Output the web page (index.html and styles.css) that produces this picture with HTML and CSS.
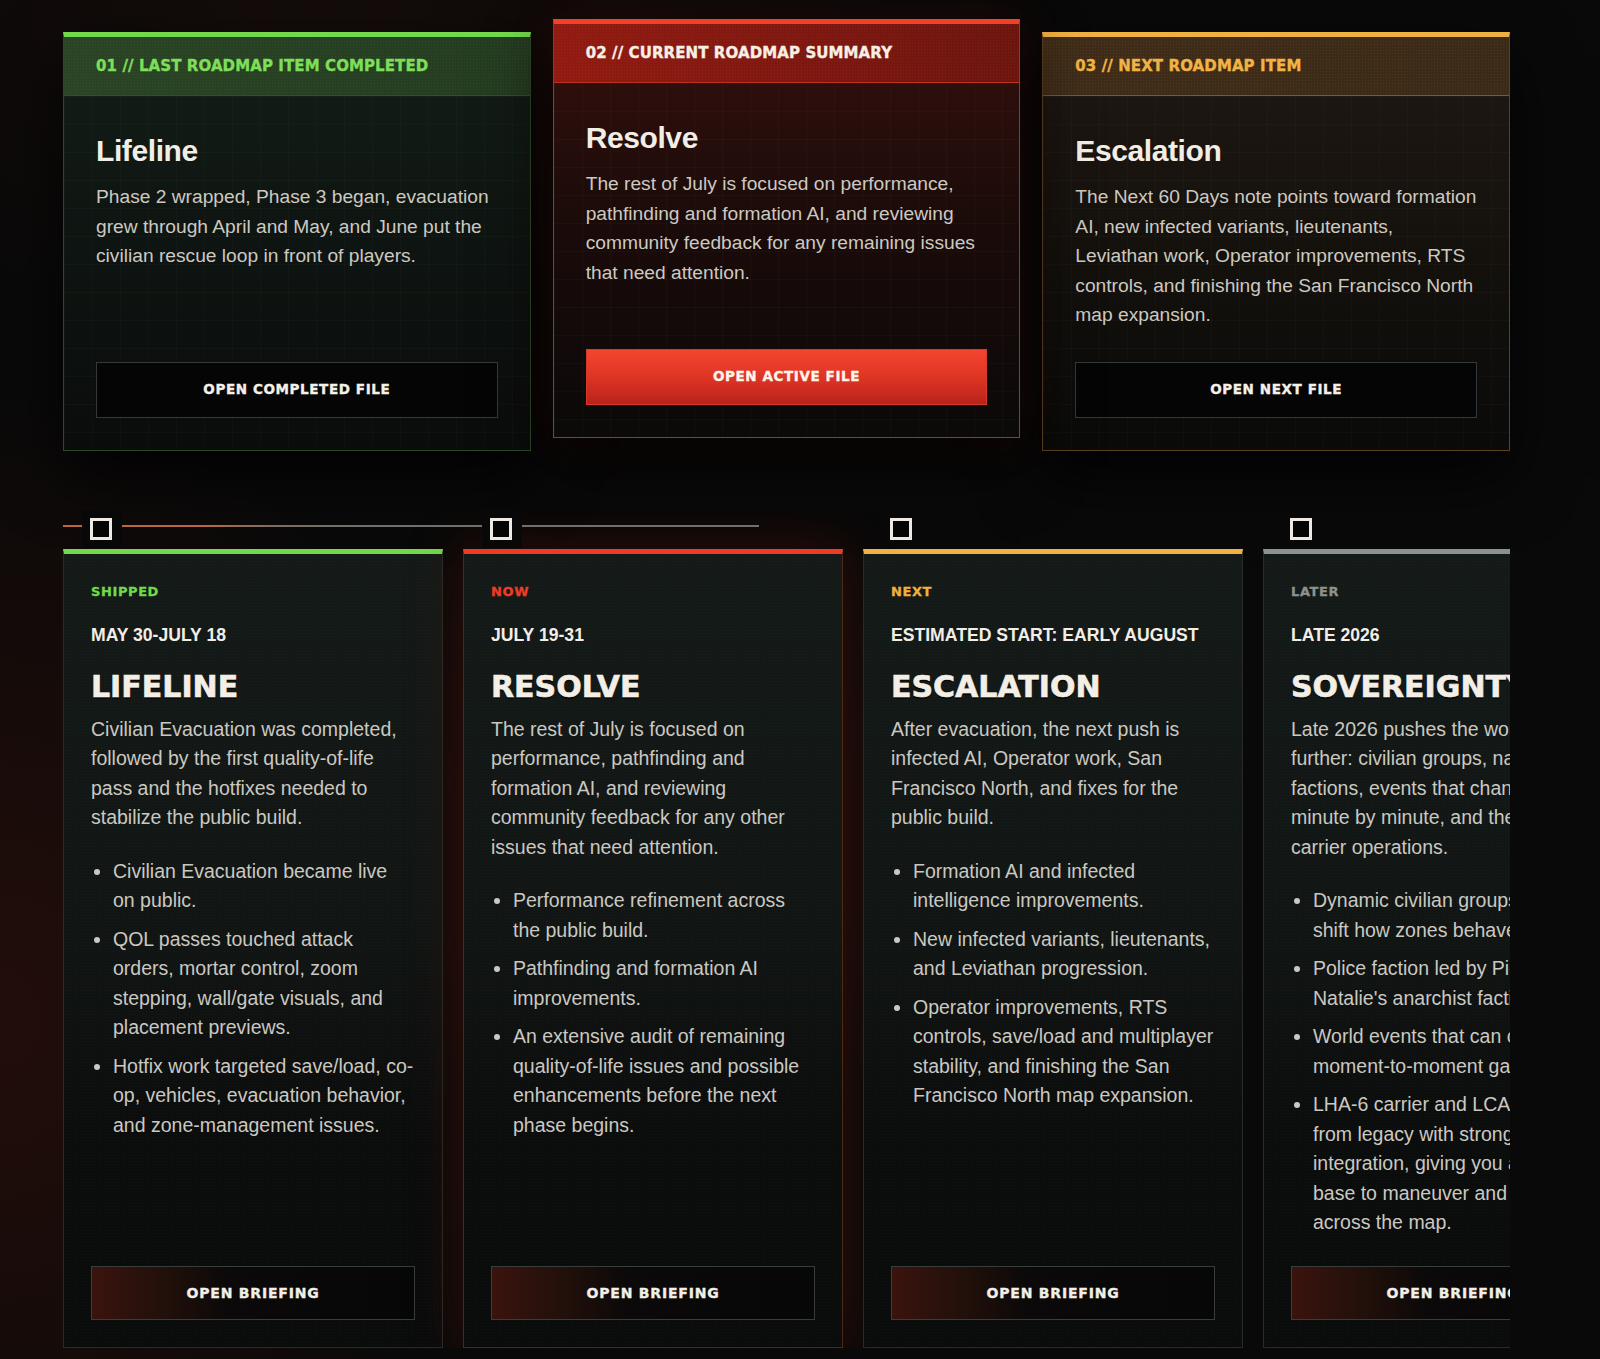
FILE: index.html
```html
<!DOCTYPE html>
<html lang="en">
<head>
<meta charset="utf-8">
<title>Roadmap</title>
<link rel="stylesheet" href="styles.css">
</head>
<body>
<div class="page">
  <section class="summary">
    <article class="sum-card sum-done">
      <header class="sum-head">01 // LAST ROADMAP ITEM COMPLETED</header>
      <div class="sum-body">
        <h2>Lifeline</h2>
        <p>Phase 2 wrapped, Phase 3 began, evacuation grew through April and May, and June put the civilian rescue loop in front of players.</p>
        <a class="sum-btn">OPEN COMPLETED FILE</a>
      </div>
    </article>
    <article class="sum-card sum-now">
      <header class="sum-head">02 // CURRENT ROADMAP SUMMARY</header>
      <div class="sum-body">
        <h2>Resolve</h2>
        <p>The rest of July is focused on performance, pathfinding and formation AI, and reviewing community feedback for any remaining issues that need attention.</p>
        <a class="sum-btn">OPEN ACTIVE FILE</a>
      </div>
    </article>
    <article class="sum-card sum-next">
      <header class="sum-head">03 // NEXT ROADMAP ITEM</header>
      <div class="sum-body">
        <h2>Escalation</h2>
        <p>The Next 60 Days note points toward formation AI, new infected variants, lieutenants, Leviathan work, Operator improvements, RTS controls, and finishing the San Francisco North map expansion.</p>
        <a class="sum-btn">OPEN NEXT FILE</a>
      </div>
    </article>
  </section>

  <section class="timeline">
    <div class="tl-line"></div>
    <div class="tl-track">
      <div class="tl-col">
        <div class="tl-marker"><span></span></div>
        <article class="phase phase-shipped">
          <div class="phase-label">SHIPPED</div>
          <div class="phase-date">MAY 30-JULY 18</div>
          <h3>LIFELINE</h3>
          <p>Civilian Evacuation was completed, followed by the first quality-of-life pass and the hotfixes needed to stabilize the public build.</p>
          <ul>
            <li>Civilian Evacuation became live on&nbsp;public.</li>
            <li>QOL passes touched attack orders, mortar control, zoom stepping, wall/gate visuals, and placement previews.</li>
            <li>Hotfix work targeted save/load, co-op, vehicles, evacuation behavior, and zone-management issues.</li>
          </ul>
          <a class="phase-btn">OPEN BRIEFING</a>
        </article>
      </div>
      <div class="tl-col">
        <div class="tl-marker"><span></span></div>
        <article class="phase phase-current">
          <div class="phase-label">NOW</div>
          <div class="phase-date">JULY 19-31</div>
          <h3>RESOLVE</h3>
          <p>The rest of July is focused on performance, pathfinding and formation AI, and reviewing community feedback for any other issues that need attention.</p>
          <ul>
            <li>Performance refinement across the&nbsp;public build.</li>
            <li>Pathfinding and formation AI improvements.</li>
            <li>An extensive audit of remaining quality-of-life issues and possible enhancements before the next phase begins.</li>
          </ul>
          <a class="phase-btn">OPEN BRIEFING</a>
        </article>
      </div>
      <div class="tl-col">
        <div class="tl-marker"><span></span></div>
        <article class="phase phase-next">
          <div class="phase-label">NEXT</div>
          <div class="phase-date">ESTIMATED START: EARLY AUGUST</div>
          <h3>ESCALATION</h3>
          <p>After evacuation, the next push is infected AI, Operator work, San Francisco North, and fixes for the public build.</p>
          <ul>
            <li>Formation AI and infected intelligence improvements.</li>
            <li>New infected variants, lieutenants, and Leviathan progression.</li>
            <li>Operator improvements, RTS controls, save/load and multiplayer stability, and finishing the San Francisco North map expansion.</li>
          </ul>
          <a class="phase-btn">OPEN BRIEFING</a>
        </article>
      </div>
      <div class="tl-col">
        <div class="tl-marker"><span></span></div>
        <article class="phase phase-later">
          <div class="phase-label">LATER</div>
          <div class="phase-date">LATE 2026</div>
          <h3>SOVEREIGNTY</h3>
          <p>Late 2026 pushes the world even further: civilian groups, named factions, events that change the city minute by minute, and the return of carrier operations.</p>
          <ul>
            <li>Dynamic civilian groups that will shift how zones behave.</li>
            <li>Police faction led by Pierce and Natalie's anarchist faction.</li>
            <li>World events that can change the moment-to-moment gameplay.</li>
            <li>LHA-6 carrier and LCACs return from legacy with stronger integration, giving you a floating base to maneuver and deploy across the map.</li>
          </ul>
          <a class="phase-btn">OPEN BRIEFING</a>
        </article>
      </div>
    </div>
  </section>
</div>
</body>
</html>
```

FILE: styles.css
```css
* { box-sizing: border-box; }

html, body {
  margin: 0;
  padding: 0;
  background: #0a0909;
}

body {
  min-height: 1359px;
  font-family: "Liberation Sans", Arial, sans-serif;
  color: #c9c6bf;
  background:
    radial-gradient(ellipse 700px 900px at 0% 75%, rgba(80, 22, 12, 0.35), transparent 70%),
    radial-gradient(ellipse 500px 420px at 41% 62%, rgba(90, 20, 10, 0.22), transparent 70%),
    radial-gradient(ellipse 800px 500px at 20% 0%, rgba(40, 18, 12, 0.35), transparent 70%),
    #0a0909;
}

.page {
  width: 1600px;
  padding: 32px 90px 11px 63px;
}

/* ---------- summary cards ---------- */
.summary {
  display: grid;
  grid-template-columns: repeat(3, 1fr);
  gap: 22px;
}

.sum-card {
  display: flex;
  flex-direction: column;
  border: 1px solid;
  border-top-width: 5px;
  box-shadow: 0 26px 60px rgba(0, 0, 0, 0.75);
}

.sum-head {
  height: 59px;
  display: flex;
  align-items: center;
  padding: 0 32px;
  font: 700 15px/1 "DejaVu Sans", sans-serif;
  letter-spacing: 0.1px;
  -webkit-text-stroke: 0.35px currentColor;
  border-bottom: 1px solid;
  background-size: 3px 3px, 100% 100%;
}

.sum-body {
  flex: 1;
  display: flex;
  flex-direction: column;
  padding: 37px 32px 32px;
  background-size: 28px 28px, 28px 28px, 100% 100%;
}

.sum-body h2 {
  margin: 0 0 13px;
  font: 700 30px/36px "Liberation Sans", Arial, sans-serif;
  letter-spacing: -0.4px;
  color: #f2eee6;
}

.sum-body p {
  margin: 0 0 32px;
  font-size: 19.2px;
  line-height: 29.5px;
  color: #cdc9c1;
}

.sum-btn {
  margin-top: auto;
  height: 56px;
  display: flex;
  align-items: center;
  justify-content: center;
  font: 700 13.5px/1 "DejaVu Sans", sans-serif;
  letter-spacing: 0.6px;
  -webkit-text-stroke: 0.35px currentColor;
  color: #f6f1e8;
  background: #050505;
  border: 1px solid #34383a;
}

.sum-done {
  border-color: #2c4a28;
  border-top-color: #73d94c;
}
.sum-done .sum-head {
  color: #7ddf58;
  border-bottom-color: #3b4a37;
  background-image:
    radial-gradient(rgba(120, 200, 100, 0.10) 0.8px, transparent 1px),
    linear-gradient(90deg, #2a4425, #243b20);
}
.sum-done .sum-body {
  background-image:
    linear-gradient(rgba(255, 255, 255, 0.018) 1px, transparent 1px),
    linear-gradient(90deg, rgba(255, 255, 255, 0.018) 1px, transparent 1px),
    linear-gradient(180deg, #121b15 0%, #0e1411 45%, #0a0c0b 100%);
}

.sum-now {
  transform: translateY(-13px);
  border-color: #b8291c;
  border-top-color: #f0412b;
  box-shadow: 0 26px 60px rgba(0, 0, 0, 0.75), 0 0 40px rgba(150, 25, 10, 0.18);
}
.sum-now .sum-head {
  color: #f8efe4;
  border-bottom-color: #c0301f;
  background-image:
    radial-gradient(rgba(255, 120, 90, 0.10) 0.8px, transparent 1px),
    linear-gradient(90deg, #911b12, #6c150f);
}
.sum-now .sum-body {
  background-image:
    linear-gradient(rgba(255, 255, 255, 0.018) 1px, transparent 1px),
    linear-gradient(90deg, rgba(255, 255, 255, 0.018) 1px, transparent 1px),
    linear-gradient(180deg, #2d0f0c 0%, #1a0b09 40%, #0b0909 100%);
}
.sum-now .sum-btn {
  border: 1px solid #d6392a;
  background: linear-gradient(180deg, #f4452f 0%, #de3524 50%, #b9231a 100%);
  color: #fff4ea;
}

.sum-next {
  border-color: #5b4322;
  border-top-color: #f1b042;
}
.sum-next .sum-head {
  color: #f2b344;
  border-bottom-color: #7a5a30;
  background-image:
    radial-gradient(rgba(230, 170, 90, 0.10) 0.8px, transparent 1px),
    linear-gradient(90deg, #3f2d19, #3b2a17);
}
.sum-next .sum-body {
  background-image:
    linear-gradient(rgba(255, 255, 255, 0.018) 1px, transparent 1px),
    linear-gradient(90deg, rgba(255, 255, 255, 0.018) 1px, transparent 1px),
    linear-gradient(180deg, #1d1611 0%, #14110d 45%, #0a0a09 100%);
}

/* ---------- timeline ---------- */
.timeline {
  position: relative;
  margin-top: 59px;
  overflow: hidden;
}

.tl-line {
  position: absolute;
  left: 0;
  top: 15px;
  width: 696px;
  height: 2px;
  background: linear-gradient(90deg, #b9683f 0%, #b9683f 20%, #7a6f66 30%, #6f6f6b 45%, #6f6f6b 100%);
}

.tl-track {
  display: flex;
  gap: 20px;
}

.tl-col {
  flex: 0 0 380px;
  display: flex;
  flex-direction: column;
}

.tl-marker {
  position: relative;
  width: 40px;
  height: 38px;
  margin: 0 0 1px 19px;
  padding: 8px;
  background: #080808;
}
.tl-marker span {
  display: block;
  width: 22px;
  height: 22px;
  border: 3px solid #eeeae1;
  background: #050505;
}

.phase {
  flex: 1;
  display: flex;
  flex-direction: column;
  padding: 30px 27px 27px;
  border: 1px solid #272c2a;
  border-top-width: 5px;
  background:
    radial-gradient(rgba(255, 255, 255, 0.025) 0.7px, transparent 1px) 0 0 / 3px 3px,
    linear-gradient(180deg, #141a18 0%, #111614 45%, #0b0c0c 75%, #0a0b0b 100%);
}

.phase-label {
  font: 700 13px/16px "DejaVu Sans", sans-serif;
  letter-spacing: 0.6px;
  -webkit-text-stroke: 0.3px currentColor;
}

.phase-date {
  margin-top: 25px;
  font: 700 17.6px/20px "Liberation Sans", Arial, sans-serif;
  color: #f3eee5;
  white-space: nowrap;
}

.phase h3 {
  margin: 24px 0 10px;
  font: 700 30px/36px "DejaVu Sans", sans-serif;
  color: #f3efe6;
  -webkit-text-stroke: 0.6px currentColor;
  text-shadow: 0 2px 0 rgba(0, 0, 0, 0.6);
  white-space: nowrap;
}

.phase p,
.phase li {
  font-size: 19.5px;
  line-height: 29.5px;
  color: #cbc8c1;
}

.phase p { margin: 0; }

.phase ul {
  margin: 24px 0 28px;
  padding: 0 0 0 22px;
}
.phase li + li { margin-top: 9px; }

.phase-btn {
  margin-top: auto;
  height: 54px;
  display: flex;
  align-items: center;
  justify-content: center;
  font: 700 14px/1 "DejaVu Sans", sans-serif;
  letter-spacing: 0.8px;
  -webkit-text-stroke: 0.35px currentColor;
  color: #f3efe6;
  white-space: nowrap;
  border: 1px solid #383e3b;
  background: linear-gradient(90deg, #3a140d 0%, #22100b 22%, #0b0909 42%, #070707 100%);
}

.phase-shipped { border-top-color: #73d94c; }
.phase-shipped .phase-label { color: #73d94c; }

.phase-current {
  border-color: #4b2a17;
  border-top-color: #ee3b25;
  box-shadow: 0 0 50px rgba(120, 25, 10, 0.35);
}
.phase-current .phase-label { color: #f03c26; }

.phase-next { border-top-color: #f0b042; }
.phase-next .phase-label { color: #f0b042; }

.phase-later { border-top-color: #8c938c; }
.phase-later .phase-label { color: #8d928d; }
```
